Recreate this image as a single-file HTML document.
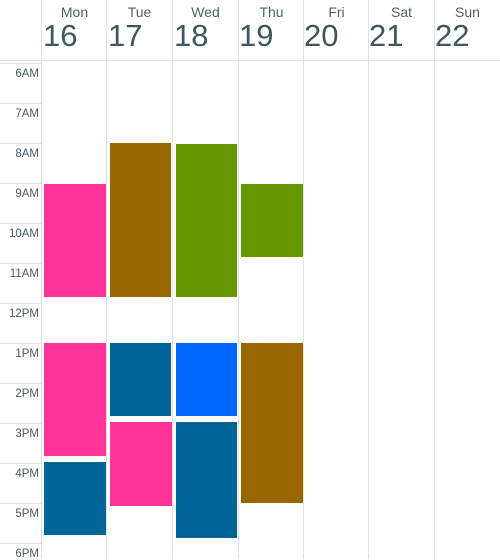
<!DOCTYPE html>
<html><head><style>
body{margin:0;width:500px;height:559px;background:#fff;position:relative;overflow:hidden;font-family:"Liberation Sans",sans-serif;color:#3f575c}
.v{position:absolute;width:1px;background:#e2e2e2}
.h{position:absolute;height:1px;background:#e2e2e2}
.dn{position:absolute;top:4px;font-size:14px;text-align:center;width:65px;color:#4d6266}
.num{position:absolute;top:18px;font-size:31px;line-height:36px}
.t{position:absolute;left:0;width:39px;text-align:right;font-size:11.5px;color:#4a5a5e}
.e{position:absolute}
</style></head><body>
<div class="h" style="left:0;top:60px;width:500px"></div>
<div class="v" style="left:41px;top:0;height:559px"></div>
<div class="v" style="left:106px;top:0;height:559px"></div>
<div class="v" style="left:172px;top:0;height:559px"></div>
<div class="v" style="left:238px;top:0;height:559px"></div>
<div class="v" style="left:303px;top:0;height:559px"></div>
<div class="v" style="left:368px;top:0;height:559px"></div>
<div class="v" style="left:434px;top:0;height:559px"></div>
<div class="h" style="left:0;top:63px;width:41px"></div>
<div class="h" style="left:0;top:103px;width:41px"></div>
<div class="h" style="left:0;top:143px;width:41px"></div>
<div class="h" style="left:0;top:183px;width:41px"></div>
<div class="h" style="left:0;top:223px;width:41px"></div>
<div class="h" style="left:0;top:263px;width:41px"></div>
<div class="h" style="left:0;top:303px;width:41px"></div>
<div class="h" style="left:0;top:343px;width:41px"></div>
<div class="h" style="left:0;top:383px;width:41px"></div>
<div class="h" style="left:0;top:423px;width:41px"></div>
<div class="h" style="left:0;top:463px;width:41px"></div>
<div class="h" style="left:0;top:503px;width:41px"></div>
<div class="h" style="left:0;top:543px;width:41px"></div>

<div class="dn" style="left:42px">Mon</div><div class="num" style="left:43px">16</div>
<div class="dn" style="left:107px">Tue</div><div class="num" style="left:108px">17</div>
<div class="dn" style="left:173px">Wed</div><div class="num" style="left:174px">18</div>
<div class="dn" style="left:239px">Thu</div><div class="num" style="left:239px">19</div>
<div class="dn" style="left:304px">Fri</div><div class="num" style="left:304px">20</div>
<div class="dn" style="left:369px">Sat</div><div class="num" style="left:369px">21</div>
<div class="dn" style="left:435px">Sun</div><div class="num" style="left:435px">22</div>

<div class="t" style="top:68px">6AM</div>
<div class="t" style="top:108px">7AM</div>
<div class="t" style="top:148px">8AM</div>
<div class="t" style="top:188px">9AM</div>
<div class="t" style="top:228px">10AM</div>
<div class="t" style="top:268px">11AM</div>
<div class="t" style="top:308px">12PM</div>
<div class="t" style="top:348px">1PM</div>
<div class="t" style="top:388px">2PM</div>
<div class="t" style="top:428px">3PM</div>
<div class="t" style="top:468px">4PM</div>
<div class="t" style="top:508px">5PM</div>
<div class="t" style="top:548px">6PM</div>

<div class="e" style="left:44px;top:184px;width:62px;height:113px;background:#ff3399"></div>
<div class="e" style="left:44px;top:343px;width:62px;height:113px;background:#ff3399"></div>
<div class="e" style="left:44px;top:462px;width:62px;height:73px;background:#006699"></div>
<div class="e" style="left:110px;top:143px;width:61px;height:154px;background:#996600"></div>
<div class="e" style="left:110px;top:343px;width:61px;height:73px;background:#006699"></div>
<div class="e" style="left:110px;top:422px;width:62px;height:84px;background:#ff3399"></div>
<div class="e" style="left:176px;top:144px;width:61px;height:153px;background:#669900"></div>
<div class="e" style="left:176px;top:343px;width:61px;height:73px;background:#0066ff"></div>
<div class="e" style="left:176px;top:422px;width:61px;height:116px;background:#006699"></div>
<div class="e" style="left:241px;top:184px;width:62px;height:73px;background:#669900"></div>
<div class="e" style="left:241px;top:343px;width:62px;height:160px;background:#996600"></div>
</body></html>
